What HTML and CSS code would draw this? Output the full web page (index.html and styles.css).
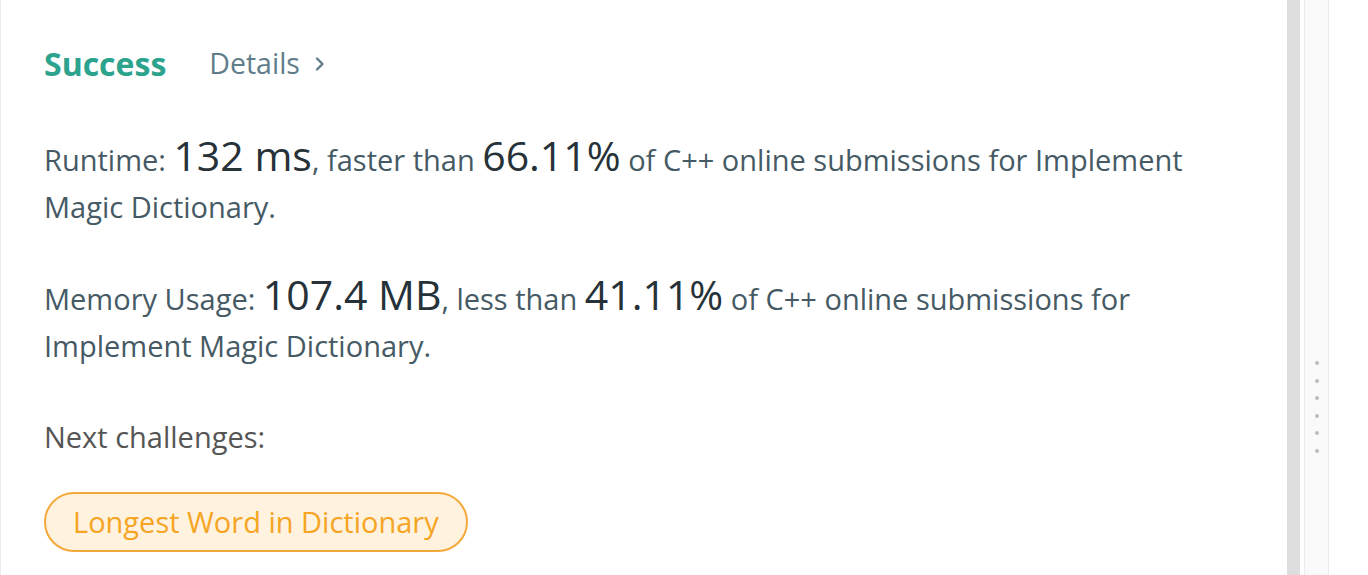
FILE: index.html
```html
<!DOCTYPE html>
<html>
<head>
<meta charset="utf-8">
<link rel="stylesheet" href="styles.css">
</head>
<body>
<div class="layout">
  <main class="panel">
    <div class="header">
      <span class="status">Success</span>
      <a class="details">Details
        <svg class="chev" width="12" height="16" viewBox="0 0 12 16"><path d="M3 2.5 L8.5 8 L3 13.5" fill="none" stroke="#607d8b" stroke-width="2.4" stroke-linecap="round" stroke-linejoin="round"/></svg>
      </a>
    </div>
    <p class="stat">Runtime: <span class="big">132 ms</span>, faster than <span class="big">66.11%</span> of C++ online submissions for Implement Magic Dictionary.</p>
    <p class="stat">Memory Usage: <span class="big">107.4 MB</span>, less than <span class="big">41.11%</span> of C++ online submissions for Implement Magic Dictionary.</p>
    <p class="next">Next challenges:</p>
    <div class="challenges">
      <a class="chip">Longest Word in Dictionary</a>
    </div>
  </main>
  <div class="track"></div>
  <div class="spacer"></div>
  <div class="resizer">
    <span class="dot"></span><span class="dot"></span><span class="dot"></span>
    <span class="dot"></span><span class="dot"></span><span class="dot"></span>
  </div>
  <div class="rest"></div>
</div>
</body>
</html>
```

FILE: styles.css
```css
html, body {
  margin: 0;
  padding: 0;
  background: #fff;
  font-family: "Open Sans", "Noto Sans", sans-serif;
}
.layout {
  display: flex;
  height: 575px;
  overflow: hidden;
}
.panel {
  width: 1287px;
  box-sizing: border-box;
  border-left: 1px solid #ececec;
  padding: 40px 0 0 43px;
}
.header {
  display: flex;
  align-items: center;
  gap: 43px;
  height: 46px;
}
.status {
  font-size: 32px;
  font-weight: 700;
  color: #2ba38d;
}
.details {
  display: flex;
  align-items: center;
  gap: 14px;
  font-size: 28.5px;
  color: #607d8b;
}
.chev {
  display: block;
  margin-top: 2px;
}
.stat {
  margin: 50px 0 0;
  width: 1200px;
  font-size: 29px;
  line-height: 47px;
  color: #455a64;
}
.stat + .stat {
  margin-top: 45px;
}
.big {
  font-size: 41px;
  line-height: 0;
  color: #263238;
}
.next {
  margin: 44px 0 0;
  font-size: 29px;
  line-height: 47px;
  color: #555;
}
.challenges {
  margin-top: 32px;
  display: flex;
}
.chip {
  display: block;
  box-sizing: border-box;
  height: 60px;
  line-height: 56px;
  padding: 0 27px;
  border: 2px solid #f3a93a;
  border-radius: 30px;
  background: #fff2de;
  color: #f5a523;
  font-size: 29px;
}
.track {
  width: 13px;
  background: #dedede;
}
.spacer {
  width: 4px;
}
.resizer {
  width: 23px;
  border-left: 1px solid #ebebeb;
  border-right: 1px solid #ebebeb;
  background: #fafafa;
  display: flex;
  flex-direction: column;
  align-items: center;
  gap: 13.6px;
  padding-top: 361px;
}
.dot {
  width: 4px;
  height: 4px;
  border-radius: 50%;
  background: #bdbdbd;
}
.rest {
  flex: 1;
}
```
